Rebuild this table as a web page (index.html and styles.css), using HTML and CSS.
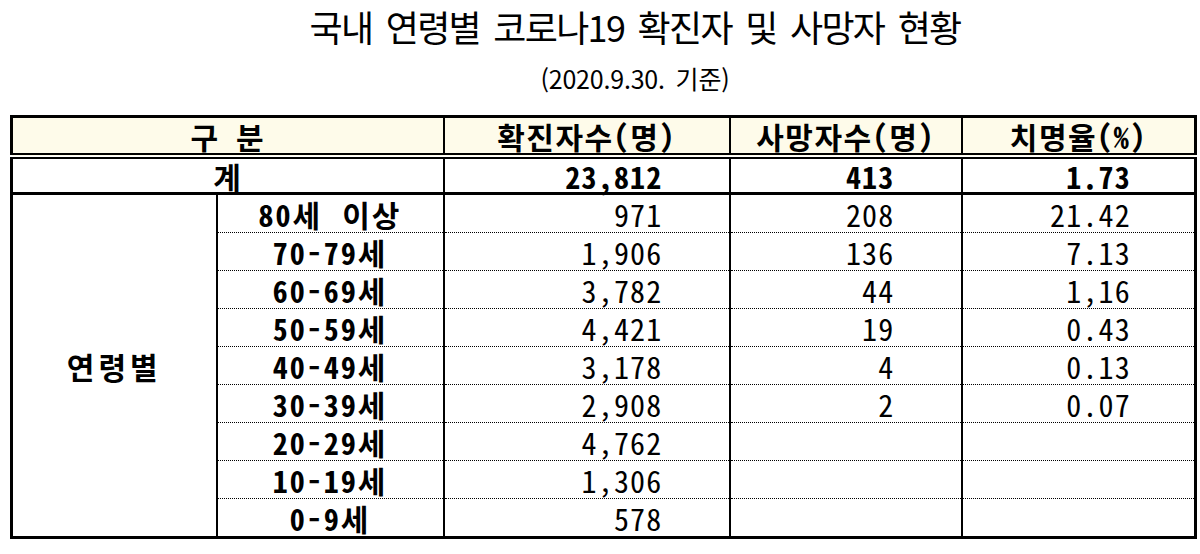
FILE: index.html
```html
<!DOCTYPE html>
<html lang="ko">
<head>
<meta charset="utf-8">
<title>국내 연령별 코로나19 확진자 및 사망자 현황</title>
<link rel="stylesheet" href="styles.css">
</head>
<body>
<div class="page">
  <header class="heading">
    <h1 class="title">국내 연령별 코로나19 확진자 및 사망자 현황</h1>
    <p class="subtitle">(2020.9.30. 기준)</p>
  </header>
  <table class="stats">
    <colgroup>
      <col class="c-group">
      <col class="c-age">
      <col class="c-conf">
      <col class="c-death">
      <col class="c-rate">
    </colgroup>
    <thead>
      <tr class="head-row">
        <th colspan="2">구 분</th>
        <th>확진자수(명)</th>
        <th>사망자수(명)</th>
        <th>치명율(%)</th>
      </tr>
    </thead>
    <tbody>
      <tr class="total-row">
        <td colspan="2" class="label">계</td>
        <td class="num">23,812</td>
        <td class="num">413</td>
        <td class="num rate">1.73</td>
      </tr>
      <tr class="data-row first">
        <td rowspan="9" class="group label">연령별</td>
        <td class="age label wide">80세 이상</td>
        <td class="num">971</td>
        <td class="num">208</td>
        <td class="num rate">21.42</td>
      </tr>
      <tr class="data-row">
        <td class="age label">70-79세</td>
        <td class="num">1,906</td>
        <td class="num">136</td>
        <td class="num rate">7.13</td>
      </tr>
      <tr class="data-row">
        <td class="age label">60-69세</td>
        <td class="num">3,782</td>
        <td class="num">44</td>
        <td class="num rate">1,16</td>
      </tr>
      <tr class="data-row">
        <td class="age label">50-59세</td>
        <td class="num">4,421</td>
        <td class="num">19</td>
        <td class="num rate">0.43</td>
      </tr>
      <tr class="data-row">
        <td class="age label">40-49세</td>
        <td class="num">3,178</td>
        <td class="num">4</td>
        <td class="num rate">0.13</td>
      </tr>
      <tr class="data-row">
        <td class="age label">30-39세</td>
        <td class="num">2,908</td>
        <td class="num">2</td>
        <td class="num rate">0.07</td>
      </tr>
      <tr class="data-row">
        <td class="age label">20-29세</td>
        <td class="num">4,762</td>
        <td class="num"></td>
        <td class="num rate"></td>
      </tr>
      <tr class="data-row">
        <td class="age label">10-19세</td>
        <td class="num">1,306</td>
        <td class="num"></td>
        <td class="num rate"></td>
      </tr>
      <tr class="data-row">
        <td class="age label">0-9세</td>
        <td class="num">578</td>
        <td class="num"></td>
        <td class="num rate"></td>
      </tr>
    </tbody>
  </table>
</div>
</body>
</html>
```

FILE: styles.css
```css
html, body {
  margin: 0;
  padding: 0;
  background: #ffffff;
}

body {
  font-family: "Noto Sans CJK KR", "Noto Sans", sans-serif;
  color: #000;
}

.page {
  width: 1200px;
  padding: 0 6px 0 10px;
  box-sizing: border-box;
}

.heading {
  padding-left: 66px;
  text-align: center;
}

.title {
  margin: 0;
  padding-top: 5px;
  font-size: 36px;
  line-height: 42px;
  font-weight: 400;
  letter-spacing: -1.7px;
  word-spacing: 5px;
}

.subtitle {
  margin: 16px 0 0 0;
  font-size: 25px;
  line-height: 30px;
  font-weight: 400;
  letter-spacing: -0.2px;
  word-spacing: 4px;
}

.stats {
  margin-top: 22px;
  width: 1184px;
  table-layout: fixed;
  border-collapse: collapse;
  border: 3px solid #000;
  font-family: "Noto Sans Mono CJK KR", "Noto Sans CJK KR", monospace;
  font-size: 30px;
  letter-spacing: 1.2px;
  background: #fff;
}

.c-group { width: 205px; }
.c-age { width: 227px; }
.c-conf { width: 286px; }
.c-death { width: 232px; }
.c-rate { width: 234px; }

.stats th,
.stats td {
  padding: 0;
  border-left: 2px solid #000;
  border-right: 2px solid #000;
  white-space: nowrap;
  line-height: 32px;
}

.head-row th {
  height: 35px;
  background: #fefbea;
  font-weight: 700;
  text-align: center;
  letter-spacing: 1.5px;
  border-bottom: 6px double #000;
}

.total-row td {
  height: 33px;
  font-weight: 700;
  border-bottom: 3px solid #000;
}

.label {
  text-align: center;
  font-weight: 700;
}

.age {
  letter-spacing: 2px;
}

.wide {
  word-spacing: 3px;
}

.group {
  vertical-align: middle;
  letter-spacing: 4px;
}

.num {
  text-align: right;
  padding-right: 66px !important;
  font-weight: 400;
}

.rate {
  padding-right: 63px !important;
}

.total-row .num {
  font-weight: 700;
}

.data-row td {
  height: 37px;
  border-top: 1px dotted #000;
}

.data-row.first td {
  border-top: 3px solid #000;
}
```
